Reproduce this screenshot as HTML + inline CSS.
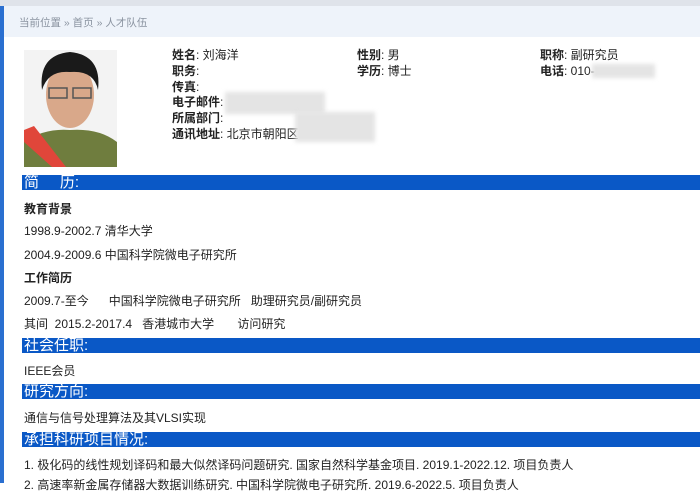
<!DOCTYPE html><html><head><meta charset="utf-8"><style>
body{margin:0;width:700px;height:483px;overflow:hidden;background:#fff;font-family:"Liberation Sans","Noto Sans CJK SC",sans-serif;color:#222;position:relative}
.a{position:absolute;white-space:nowrap}
.bar{position:absolute;left:22px;right:0;height:15px;background:#0a58c6;color:#fff;font-size:15px;line-height:15px;padding-left:2px}
.t{font-size:12px}
b{font-weight:bold}
.blur{position:absolute;background:#e4e4e4;filter:blur(2px)}
</style></head><body>
<div class="a" style="left:0;top:0;width:700px;height:6px;background:#dfe3ea"></div>
<div class="a" style="left:0;top:6px;width:4px;height:477px;background:#2a6fd0"></div>
<div class="a" style="left:4px;top:6px;width:696px;height:31px;background:#eef3fa"></div>
<div class="a" style="left:19px;top:15px;font-size:10.5px;color:#8a93a0">当前位置 » 首页 » 人才队伍</div>
<svg class="a" style="left:24px;top:50px" width="93" height="117" viewBox="0 0 93 117">
<rect width="93" height="117" fill="#f3f3f3"/>
<path d="M0 117 L0 92 Q20 78 46 80 Q75 78 93 92 L93 117Z" fill="#6f7d3e"/>
<path d="M0 80 L10 76 L42 117 L28 117 L0 92Z" fill="#e0463a"/>
<ellipse cx="46" cy="45" rx="24" ry="33" fill="#d9a88a"/>
<path d="M18 40 Q14 5 46 2 Q78 5 74 40 Q70 20 46 22 Q24 20 18 40Z" fill="#1a1a1a"/>
<path d="M25 38 h18 v10 h-18z M49 38 h18 v10 h-18z" fill="none" stroke="#555" stroke-width="1.5"/>
</svg>
<div class="a t" style="left:172px;top:48px;line-height:15.8px"><b>姓名</b>: 刘海洋<br><b>职务</b>:<br><b>传真</b>:<br><b>电子邮件</b>:<br><b>所属部门</b>:<br><b>通讯地址</b>: 北京市朝阳区</div>
<div class="a t" style="left:357px;top:48px;line-height:15.8px"><b>性别</b>: 男<br><b>学历</b>: 博士</div>
<div class="a t" style="left:540px;top:48px;line-height:15.8px"><b>职称</b>: 副研究员<br><b>电话</b>: 010-</div>
<div class="blur" style="left:592px;top:64px;width:63px;height:14px"></div>
<div class="blur" style="left:225px;top:92px;width:100px;height:22px"></div>
<div class="blur" style="left:295px;top:112px;width:80px;height:30px"></div>
<div class="bar" style="top:175px">简&nbsp;&nbsp;&nbsp;&nbsp;&nbsp;历:</div>
<div class="a t" style="left:24px;top:200px"><b>教育背景</b></div>
<div class="a t" style="left:24px;top:222px">1998.9-2002.7 清华大学</div>
<div class="a t" style="left:24px;top:246px">2004.9-2009.6 中国科学院微电子研究所</div>
<div class="a t" style="left:24px;top:269px"><b>工作简历</b></div>
<div class="a t" style="left:24px;top:292px">2009.7-至今&nbsp;&nbsp;&nbsp;&nbsp;&nbsp;&nbsp;中国科学院微电子研究所&nbsp;&nbsp;&nbsp;助理研究员/副研究员</div>
<div class="a t" style="left:24px;top:315px">其间&nbsp;&nbsp;2015.2-2017.4&nbsp;&nbsp;&nbsp;香港城市大学&nbsp;&nbsp;&nbsp;&nbsp;&nbsp;&nbsp;&nbsp;访问研究</div>
<div class="bar" style="top:338px">社会任职:</div>
<div class="a t" style="left:24px;top:362px">IEEE会员</div>
<div class="bar" style="top:384px">研究方向:</div>
<div class="a t" style="left:24px;top:409px">通信与信号处理算法及其VLSI实现</div>
<div class="bar" style="top:432px">承担科研项目情况:</div>
<div class="a t" style="left:24px;top:456px">1. 极化码的线性规划译码和最大似然译码问题研究. 国家自然科学基金项目. 2019.1-2022.12. 项目负责人</div>
<div class="a t" style="left:24px;top:476px">2. 高速率新金属存储器大数据训练研究. 中国科学院微电子研究所. 2019.6-2022.5. 项目负责人</div>
</body></html>
